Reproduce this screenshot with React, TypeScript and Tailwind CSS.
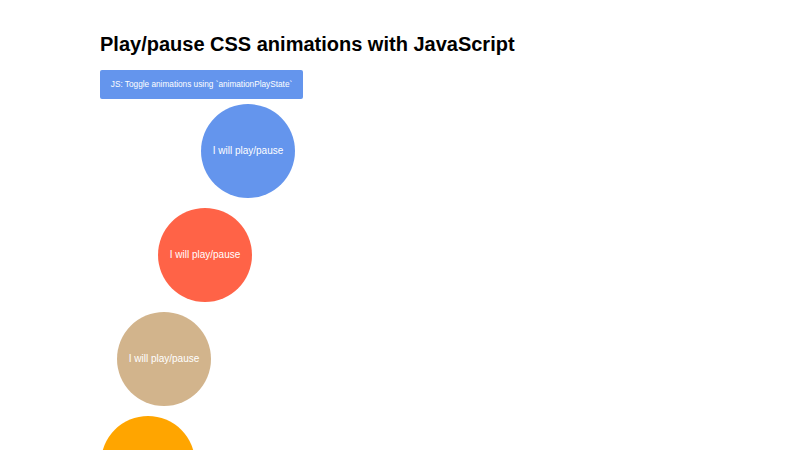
import React from "react";

const circles = [
  { color: "bg-[#6495ED]", ml: "ml-[101px]" },
  { color: "bg-[#FF6347]", ml: "ml-[58px]" },
  { color: "bg-[#D2B48C]", ml: "ml-[17px]" },
  { color: "bg-[#FFA500]", ml: "ml-[1px]" },
];

export default function App() {
  return (
    <div className="w-[800px] h-[450px] overflow-hidden bg-white pl-[100px] pt-[33px] font-['Liberation_Sans',Arial,sans-serif]">
      <h1 className="text-[20px] leading-[23px] font-bold text-black">
        Play/pause CSS animations with JavaScript
      </h1>
      <button className="mt-[14px] h-[29px] w-[203px] rounded-[2px] bg-[#6495ED] text-white text-[8.25px] leading-[10px] flex items-center justify-center">
        JS: Toggle animations using `animationPlayState`
      </button>
      <div className="flex flex-col">
        {circles.map((c, i) => (
          <div
            key={i}
            className={`${c.color} ${c.ml} ${i === 0 ? "mt-[5px]" : "mt-[10px]"} w-[94px] h-[94px] shrink-0 rounded-full flex items-center justify-center text-white text-[10px] leading-[12px]`}
          >
            I will play/pause
          </div>
        ))}
      </div>
    </div>
  );
}
